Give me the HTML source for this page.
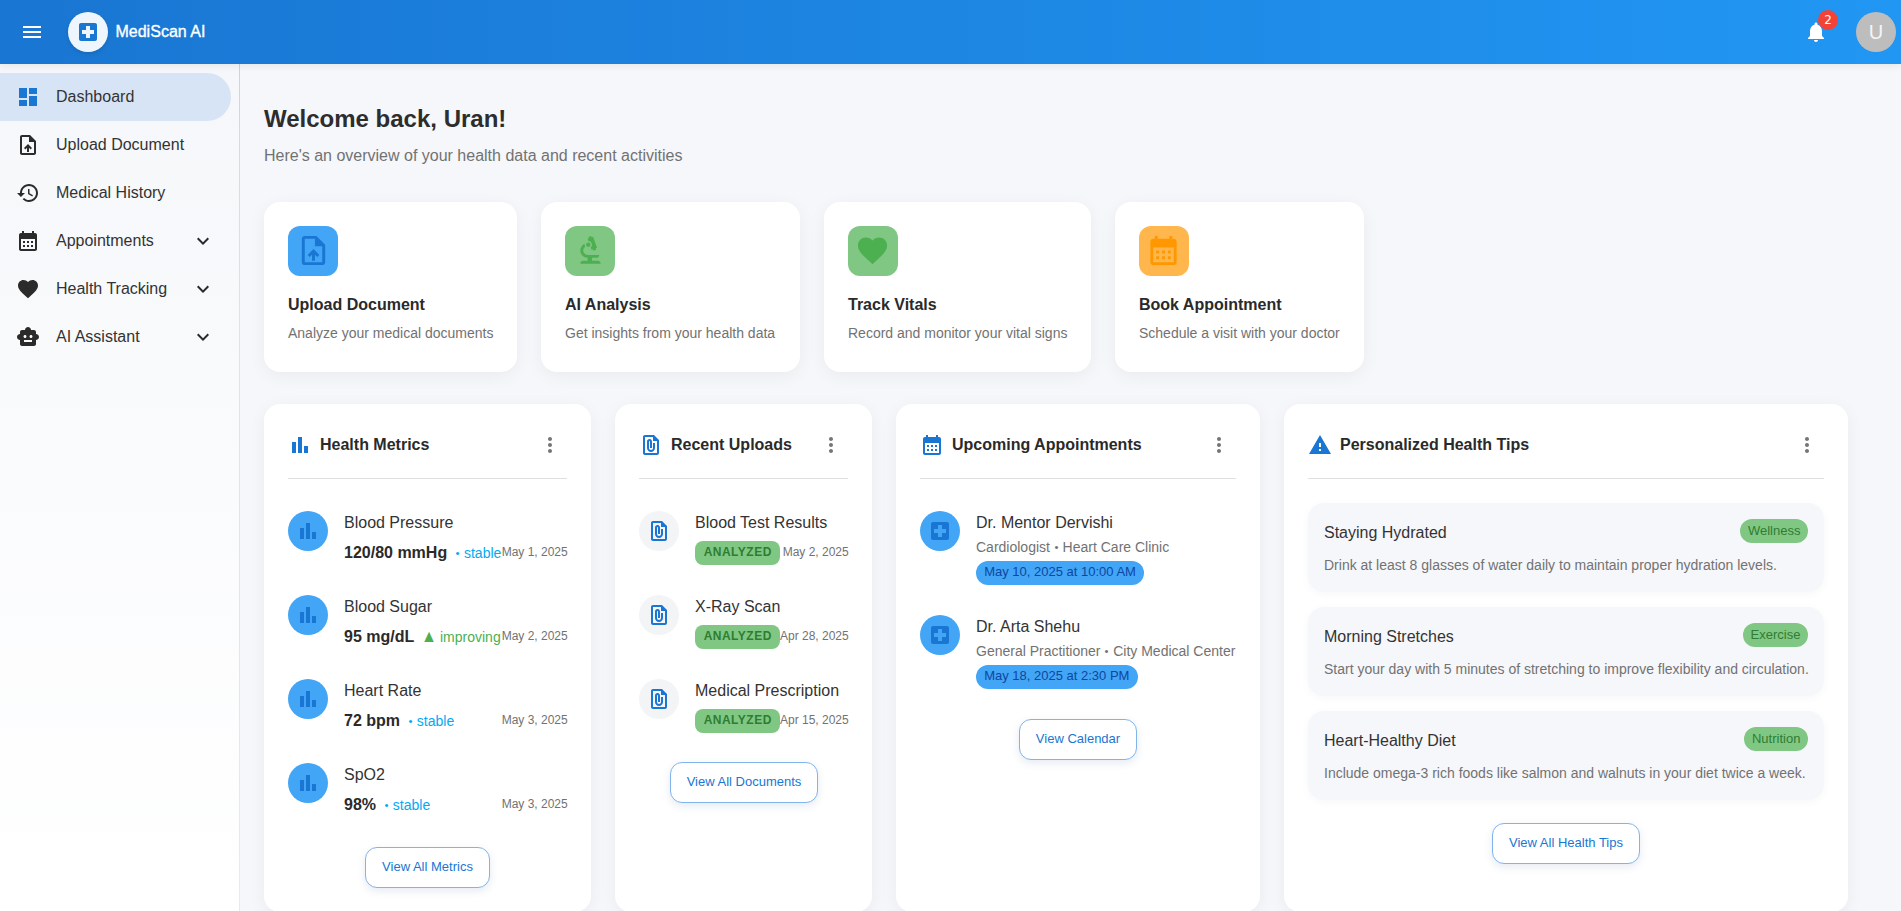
<!DOCTYPE html>
<html lang="en">
<head>
<meta charset="utf-8">
<title>MediScan AI</title>
<style>
*{box-sizing:border-box;margin:0;padding:0}
html,body{width:1901px;height:911px;overflow:hidden}
body{font-family:"Liberation Sans",Arial,sans-serif;background:#f5f7fb;color:#222;position:relative}
svg{display:block}
.abs{position:absolute}
/* header */
#hdr{position:absolute;left:0;top:0;width:1901px;height:64px;background:linear-gradient(90deg,#1976d2 0%,#2196f3 100%);box-shadow:0 2px 8px rgba(0,0,0,.07);z-index:5}
#logo{position:absolute;left:68px;top:12px;width:40px;height:40px;border-radius:50%;background:rgba(255,255,255,.93);box-shadow:0 2px 4px rgba(0,0,0,.12)}
#brand{position:absolute;left:115.4px;top:22px;font-size:16px;line-height:20px;color:#fff;letter-spacing:.03px;-webkit-text-stroke:.35px #fff;white-space:nowrap}
#badge{position:absolute;left:1818px;top:10px;width:20px;height:20px;border-radius:10px;background:#f44336;color:#fff;font-family:"DejaVu Sans","Liberation Sans",sans-serif;font-size:12px;line-height:20px;text-align:center;font-weight:500}
#avatar{position:absolute;left:1856px;top:12px;width:40px;height:40px;border-radius:50%;background:#bdbdbd;color:#f5f5f5;font-size:20px;line-height:40px;text-align:center}
/* sidebar */
#side{position:absolute;left:0;top:64px;width:240px;height:847px;background:linear-gradient(180deg,#f5f7fa 0%,#fff 100%)}
#side:after{content:'';position:absolute;right:0;top:0;width:1px;height:100%;background:linear-gradient(180deg,#d2d2d3 0,#dadadb 10%,#e2e2e4 32%,#e8e9ec 100%)}
.nav{position:absolute;left:0;width:231px;height:48px;border-radius:0 24px 24px 0;font-size:16px;line-height:48px;color:#333;padding-left:56px;white-space:nowrap}
.nav.sel{background:#d7e4f6}
.nav svg.i{position:absolute;left:16px;top:12px;width:24px;height:24px;fill:#2b2b2b}
.nav.sel svg.i{fill:#1976d2}
.nav svg.c{position:absolute;left:191px;top:12px;width:24px;height:24px;fill:#2b2b2b}
/* main */
h1{position:absolute;left:264px;top:103px;font-size:24px;line-height:32px;font-weight:700;color:#2d2d2d;white-space:nowrap}
#sub{position:absolute;left:264px;top:144px;font-size:16px;line-height:24px;color:#727272;white-space:nowrap}
.card{position:absolute;background:#fff;border-radius:16px;box-shadow:0 4px 18px rgba(0,0,0,.05)}
.q .ib{position:absolute;left:24px;top:24px;width:50px;height:50px;border-radius:12px}
.q .ib svg{position:absolute;left:7.5px;top:7px;width:35px;height:35px}
.q .t{position:absolute;left:24px;top:91px;font-size:16px;line-height:24px;font-weight:700;color:#2a2a2a;white-space:nowrap}
.q .d{position:absolute;left:24px;top:121px;font-size:14px;line-height:20px;color:#727272;white-space:nowrap}
.b .hi{position:absolute;left:24px;top:29px;width:24px;height:24px;fill:#1976d2}
.b .ht{position:absolute;left:56px;top:29px;font-size:16px;line-height:24px;font-weight:700;color:#2a2a2a;white-space:nowrap}
.b .mv{position:absolute;top:29px;width:24px;height:24px;fill:#757575}
.b .hr{position:absolute;left:24px;right:24px;top:74px;height:1px;background:#e0e0e0}
.av{position:absolute;left:24px;width:40px;height:40px;border-radius:50%}
.av svg{position:absolute;left:8px;top:8px;width:24px;height:24px}
.it{position:absolute;left:80px;font-size:16px;line-height:24px;color:#333;white-space:nowrap}
.val{position:absolute;left:80px;font-size:16px;line-height:24px;font-weight:700;color:#2a2a2a;white-space:nowrap}
.tr{position:absolute;font-size:14px;line-height:20px;white-space:nowrap}
.dt{position:absolute;right:23.3px;font-size:12px;line-height:20px;color:#727272;white-space:nowrap}
.btn{position:absolute;height:40.8px;border:1px solid #80b4ea;border-radius:12px;background:#fff;color:#1976d2;font-size:13px;line-height:38px;text-align:center;box-shadow:0 3px 8px rgba(20,60,140,.11);white-space:nowrap}
.chip{position:absolute;border-radius:12px;white-space:nowrap;text-align:center}
.sm{position:absolute;left:80px;font-size:14px;line-height:20px;color:#727272;white-space:nowrap}
.tip{position:absolute;left:24px;width:516px;height:89px;border-radius:16px;background:#f6f7fb;box-shadow:0 2px 10px rgba(0,0,0,.035)}
.tip .tt{position:absolute;left:16px;top:18px;font-size:16px;line-height:24px;color:#333;white-space:nowrap}
.tip .td{position:absolute;left:16px;top:52px;font-size:14px;line-height:20px;color:#727272;white-space:nowrap}
.tip .tc{position:absolute;right:16px;top:16px;height:24px;border-radius:12px;background:#81c784;color:#2e7d32;font-size:13px;line-height:23px;padding:0 7.6px;white-space:nowrap}
.trs{font-size:14px;font-weight:400;margin-left:8px}
.chip.an{height:23.5px;width:85px;border-radius:8px;background:#81c784;color:#2e7d32;font-size:12px;line-height:23px;font-weight:700;letter-spacing:.5px;padding-left:.5px}
.chip.ap{height:24px;border-radius:12px;background:#42a5f5;color:#0d47a1;font-size:13px;line-height:21px;padding:0 8.2px}
.tri{display:inline-block;transform:translateY(.9px) scale(1.15,1.25);transform-origin:50% 82%}
.bl{display:inline-block;transform:scale(.82);transform-origin:50% 58%}
</style>
</head>
<body>
<div id="hdr">
  <svg class="abs" style="left:20px;top:20px;width:24px;height:24px;fill:#fff" viewBox="0 0 24 24"><path d="M3 18h18v-2H3v2zm0-5h18v-2H3v2zm0-7v2h18V6H3z"/></svg>
  <div id="logo"><svg class="abs" style="left:8px;top:8px;width:24px;height:24px;fill:#1976d2" viewBox="0 0 24 24"><path d="M19 3H5c-1.100 0-1.990.9-1.990 2L3 19c0 1.100.9 2 2 2h14c1.100 0 2-.9 2-2V5c0-1.100-.9-2-2-2zm-1 11h-4v4h-4v-4H6v-4h4V6h4v4h4v4z"/></svg></div>
  <div id="brand">MediScan AI</div>
  <svg class="abs" style="left:1804px;top:20px;width:24px;height:24px;fill:#fff" viewBox="0 0 24 24"><path d="M12 22c1.100 0 2-.9 2-2h-4c0 1.100.89 2 2 2zm6-6v-5c0-3.070-1.640-5.640-4.500-6.320V4c0-.83-.67-1.500-1.500-1.500s-1.500.67-1.500 1.500v.68C7.630 5.360 6 7.920 6 11v5l-2 2v1h16v-1l-2-2z"/></svg>
  <div id="badge">2</div>
  <div id="avatar">U</div>
</div>
<div id="side">
  <div class="nav sel" style="top:9px"><svg class="i" viewBox="0 0 24 24"><path d="M3 13h8V3H3v10zm0 8h8v-6H3v6zm10 0h8V11h-8v10zm0-18v6h8V3h-8z"/></svg>Dashboard</div>
  <div class="nav" style="top:57px"><svg class="i" viewBox="0 0 24 24"><path d="M14 2H6c-1.100 0-1.990.9-1.990 2L4 20c0 1.100.89 2 1.990 2H18c1.100 0 2-.9 2-2V8l-6-6zm4 18H6V4h7v5h5v11zM8 15.010l1.410 1.410L11 14.840V19h2v-4.160l1.590 1.590L16 15.010 12.010 11 8 15.010z"/></svg>Upload Document</div>
  <div class="nav" style="top:105px"><svg class="i" viewBox="0 0 24 24"><path d="M13 3c-4.970 0-9 4.030-9 9H1l3.890 3.890.07.140L9 12H6c0-3.870 3.130-7 7-7s7 3.130 7 7-3.130 7-7 7c-1.930 0-3.680-.79-4.940-2.060l-1.420 1.420C8.270 19.990 10.510 21 13 21c4.970 0 9-4.030 9-9s-4.030-9-9-9zm-1 5v5l4.280 2.540.72-1.210-3.500-2.080V8H12z"/></svg>Medical History</div>
  <div class="nav" style="top:153px"><svg class="i" viewBox="0 0 24 24"><path d="M19 4h-1V2h-2v2H8V2H6v2H5c-1.110 0-1.990.9-1.990 2L3 20c0 1.100.89 2 2 2h14c1.100 0 2-.9 2-2V6c0-1.100-.9-2-2-2zm0 16H5V10h14v10zM9 14H7v-2h2v2zm4 0h-2v-2h2v2zm4 0h-2v-2h2v2zm-8 4H7v-2h2v2zm4 0h-2v-2h2v2zm4 0h-2v-2h2v2z"/></svg>Appointments<svg class="c" viewBox="0 0 24 24"><path d="M16.590 8.590 12 13.170 7.410 8.590 6 10l6 6 6-6z"/></svg></div>
  <div class="nav" style="top:201px"><svg class="i" viewBox="0 0 24 24"><path d="m12 21.350-1.450-1.320C5.400 15.360 2 12.280 2 8.500 2 5.420 4.420 3 7.500 3c1.740 0 3.410.81 4.500 2.090C13.090 3.810 14.760 3 16.500 3 19.580 3 22 5.420 22 8.500c0 3.780-3.400 6.860-8.550 11.540L12 21.350z"/></svg>Health Tracking<svg class="c" viewBox="0 0 24 24"><path d="M16.590 8.590 12 13.170 7.410 8.590 6 10l6 6 6-6z"/></svg></div>
  <div class="nav" style="top:249px"><svg class="i" viewBox="0 0 24 24"><path d="M20 9V7c0-1.100-.9-2-2-2h-3c0-1.660-1.340-3-3-3S9 3.340 9 5H6c-1.100 0-2 .9-2 2v2c-1.660 0-3 1.340-3 3s1.340 3 3 3v4c0 1.100.9 2 2 2h12c1.100 0 2-.9 2-2v-4c1.660 0 3-1.340 3-3s-1.340-3-3-3zM7.500 11.500c0-.83.67-1.500 1.500-1.500s1.500.67 1.500 1.500S9.830 13 9 13s-1.500-.67-1.500-1.500zM16 17H8v-2h8v2zm-1-4c-.83 0-1.500-.67-1.500-1.500S14.170 10 15 10s1.500.67 1.500 1.500S15.830 13 15 13z"/></svg>AI Assistant<svg class="c" viewBox="0 0 24 24"><path d="M16.590 8.590 12 13.170 7.410 8.590 6 10l6 6 6-6z"/></svg></div>
</div>
<h1>Welcome back, Uran!</h1>
<div id="sub">Here's an overview of your health data and recent activities</div>
<div class="card q" style="left:264px;top:202px;width:253px;height:170px">
  <div class="ib" style="background:#42a5f5"><svg viewBox="0 0 24 24" fill="#1976d2"><path d="M14 2H6c-1.100 0-1.990.9-1.990 2L4 20c0 1.100.89 2 1.990 2H18c1.100 0 2-.9 2-2V8l-6-6zm4 18H6V4h7v5h5v11zM8 15.010l1.410 1.410L11 14.840V19h2v-4.160l1.590 1.590L16 15.010 12.010 11 8 15.010z"/></svg></div>
  <div class="t">Upload Document</div><div class="d">Analyze your medical documents</div>
</div>
<div class="card q" style="left:541px;top:202px;width:259px;height:170px">
  <div class="ib" style="background:#81c784"><svg viewBox="0 0 24 24" fill="#4caf50"><path d="M7 19c-1.100 0-2 .9-2 2h14c0-1.100-.9-2-2-2h-4v-2h3c1.100 0 2-.9 2-2h-8c-1.660 0-3-1.340-3-3 0-1.090.59-2.040 1.460-2.560C8.170 9.030 8 8.540 8 8c0-.21.040-.42.090-.62C6.280 8.130 5 9.920 5 12c0 2.760 2.240 5 5 5v2H7z"/><path d="M10.560 5.510C11.910 5.540 13 6.640 13 8c0 .75-.33 1.410-.85 1.870l.59 1.620.94-.34.34.94 1.880-.68-.34-.94.94-.34-2.740-7.520-.94.34-.34-.94-1.880.68.34.94-.94.35.56 1.530z"/><circle cx="10.500" cy="8" r="1.500"/></svg></div>
  <div class="t">AI Analysis</div><div class="d">Get insights from your health data</div>
</div>
<div class="card q" style="left:824px;top:202px;width:267px;height:170px">
  <div class="ib" style="background:#81c784"><svg style="left:6.5px;top:6.5px" viewBox="0 0 24 24" fill="#4caf50"><path d="m12 21.350-1.450-1.320C5.400 15.360 2 12.280 2 8.500 2 5.420 4.420 3 7.500 3c1.740 0 3.410.81 4.500 2.090C13.090 3.810 14.760 3 16.500 3 19.580 3 22 5.420 22 8.500c0 3.780-3.400 6.860-8.550 11.540L12 21.350z"/></svg></div>
  <div class="t">Track Vitals</div><div class="d">Record and monitor your vital signs</div>
</div>
<div class="card q" style="left:1115px;top:202px;width:249px;height:170px">
  <div class="ib" style="background:#ffb74d"><svg style="left:6.5px;top:7px" viewBox="0 0 24 24" fill="#ff9800"><path d="M19 4h-1V2h-2v2H8V2H6v2H5c-1.110 0-1.990.9-1.990 2L3 20c0 1.100.89 2 2 2h14c1.100 0 2-.9 2-2V6c0-1.100-.9-2-2-2zm0 16H5V10h14v10zM9 14H7v-2h2v2zm4 0h-2v-2h2v2zm4 0h-2v-2h2v2zm-8 4H7v-2h2v2zm4 0h-2v-2h2v2zm4 0h-2v-2h2v2z"/></svg></div>
  <div class="t">Book Appointment</div><div class="d">Schedule a visit with your doctor</div>
</div>

<div class="card b" style="left:264px;top:404px;width:327px;height:508px">
<svg class="hi" style="" viewBox="0 0 24 24"><path d="M4 9h4v11H4zm12 4h4v7h-4zm-6-9h4v16h-4z"/></svg><div class="ht">Health Metrics</div><svg class="mv" style="left:274px" viewBox="0 0 24 24"><path d="M12 8c1.100 0 2-.9 2-2s-.9-2-2-2-2 .9-2 2 .9 2 2 2zm0 2c-1.100 0-2 .9-2 2s.9 2 2 2 2-.9 2-2-.9-2-2-2zm0 6c-1.100 0-2 .9-2 2s.9 2 2 2 2-.9 2-2-.9-2-2-2z"/></svg><div class="hr"></div>
<div class="av" style="top:107px;background:#42a5f5"><svg class="" style="fill:#1976d2" viewBox="0 0 24 24"><path d="M4 9h4v11H4zm12 4h4v7h-4zm-6-9h4v16h-4z"/></svg></div>
<div class="it" style="top:107px">Blood Pressure</div>
<div class="val" style="top:137px">120/80 mmHg<span class="trs" style="color:#03a9f4"><span class="bl">•</span> stable</span></div>
<div class="dt" style="top:138px">May 1, 2025</div>
<div class="av" style="top:191px;background:#42a5f5"><svg class="" style="fill:#1976d2" viewBox="0 0 24 24"><path d="M4 9h4v11H4zm12 4h4v7h-4zm-6-9h4v16h-4z"/></svg></div>
<div class="it" style="top:191px">Blood Sugar</div>
<div class="val" style="top:221px">95 mg/dL<span class="trs" style="color:#4caf50"><span class="tri">▲</span> improving</span></div>
<div class="dt" style="top:222px">May 2, 2025</div>
<div class="av" style="top:275px;background:#42a5f5"><svg class="" style="fill:#1976d2" viewBox="0 0 24 24"><path d="M4 9h4v11H4zm12 4h4v7h-4zm-6-9h4v16h-4z"/></svg></div>
<div class="it" style="top:275px">Heart Rate</div>
<div class="val" style="top:305px">72 bpm<span class="trs" style="color:#03a9f4"><span class="bl">•</span> stable</span></div>
<div class="dt" style="top:306px">May 3, 2025</div>
<div class="av" style="top:359px;background:#42a5f5"><svg class="" style="fill:#1976d2" viewBox="0 0 24 24"><path d="M4 9h4v11H4zm12 4h4v7h-4zm-6-9h4v16h-4z"/></svg></div>
<div class="it" style="top:359px">SpO2</div>
<div class="val" style="top:389px">98%<span class="trs" style="color:#03a9f4"><span class="bl">•</span> stable</span></div>
<div class="dt" style="top:390px">May 3, 2025</div>
<div class="btn" style="left:101px;top:443px;width:125px">View All Metrics</div>
</div>
<div class="card b" style="left:615px;top:404px;width:257px;height:508px">
<svg class="hi" style="" viewBox="0 0 24 24"><path d="M15 2H6c-1.100 0-2 .9-2 2v16c0 1.100.9 2 2 2h12c1.100 0 2-.9 2-2V7l-5-5zM6 20V4h8v4h4v12H6zm10-10v5c0 2.210-1.790 4-4 4s-4-1.790-4-4V8.500c0-1.470 1.260-2.640 2.760-2.490 1.300.13 2.240 1.320 2.240 2.630V15h-2V8.500c0-.28-.22-.5-.5-.5s-.5.220-.5.500V15c0 1.100.9 2 2 2s2-.9 2-2v-5h2z"/></svg><div class="ht">Recent Uploads</div><svg class="mv" style="left:204px" viewBox="0 0 24 24"><path d="M12 8c1.100 0 2-.9 2-2s-.9-2-2-2-2 .9-2 2 .9 2 2 2zm0 2c-1.100 0-2 .9-2 2s.9 2 2 2 2-.9 2-2-.9-2-2-2zm0 6c-1.100 0-2 .9-2 2s.9 2 2 2 2-.9 2-2-.9-2-2-2z"/></svg><div class="hr"></div>
<div class="av" style="top:107px;background:#f3f4f6"><svg class="" style="fill:#1976d2" viewBox="0 0 24 24"><path d="M15 2H6c-1.100 0-2 .9-2 2v16c0 1.100.9 2 2 2h12c1.100 0 2-.9 2-2V7l-5-5zM6 20V4h8v4h4v12H6zm10-10v5c0 2.210-1.790 4-4 4s-4-1.790-4-4V8.500c0-1.470 1.260-2.640 2.760-2.490 1.300.13 2.240 1.320 2.240 2.630V15h-2V8.500c0-.28-.22-.5-.5-.5s-.5.220-.5.500V15c0 1.100.9 2 2 2s2-.9 2-2v-5h2z"/></svg></div>
<div class="it" style="top:107px">Blood Test Results</div>
<div class="chip an" style="left:80px;top:137px">ANALYZED</div>
<div class="dt" style="top:138px">May 2, 2025</div>
<div class="av" style="top:191px;background:#f3f4f6"><svg class="" style="fill:#1976d2" viewBox="0 0 24 24"><path d="M15 2H6c-1.100 0-2 .9-2 2v16c0 1.100.9 2 2 2h12c1.100 0 2-.9 2-2V7l-5-5zM6 20V4h8v4h4v12H6zm10-10v5c0 2.210-1.790 4-4 4s-4-1.790-4-4V8.500c0-1.470 1.260-2.640 2.760-2.490 1.300.13 2.240 1.320 2.240 2.630V15h-2V8.500c0-.28-.22-.5-.5-.5s-.5.220-.5.500V15c0 1.100.9 2 2 2s2-.9 2-2v-5h2z"/></svg></div>
<div class="it" style="top:191px">X-Ray Scan</div>
<div class="chip an" style="left:80px;top:221px">ANALYZED</div>
<div class="dt" style="top:222px">Apr 28, 2025</div>
<div class="av" style="top:275px;background:#f3f4f6"><svg class="" style="fill:#1976d2" viewBox="0 0 24 24"><path d="M15 2H6c-1.100 0-2 .9-2 2v16c0 1.100.9 2 2 2h12c1.100 0 2-.9 2-2V7l-5-5zM6 20V4h8v4h4v12H6zm10-10v5c0 2.210-1.790 4-4 4s-4-1.790-4-4V8.500c0-1.470 1.260-2.640 2.760-2.490 1.300.13 2.240 1.320 2.240 2.630V15h-2V8.500c0-.28-.22-.5-.5-.5s-.5.220-.5.500V15c0 1.100.9 2 2 2s2-.9 2-2v-5h2z"/></svg></div>
<div class="it" style="top:275px">Medical Prescription</div>
<div class="chip an" style="left:80px;top:305px">ANALYZED</div>
<div class="dt" style="top:306px">Apr 15, 2025</div>
<div class="btn" style="left:55px;top:358px;width:148px">View All Documents</div>
</div>
<div class="card b" style="left:896px;top:404px;width:364px;height:508px">
<svg class="hi" style="" viewBox="0 0 24 24"><path d="M19 4h-1V2h-2v2H8V2H6v2H5c-1.110 0-1.990.9-1.990 2L3 20c0 1.100.89 2 2 2h14c1.100 0 2-.9 2-2V6c0-1.100-.9-2-2-2zm0 16H5V10h14v10zM9 14H7v-2h2v2zm4 0h-2v-2h2v2zm4 0h-2v-2h2v2zm-8 4H7v-2h2v2zm4 0h-2v-2h2v2zm4 0h-2v-2h2v2z"/></svg><div class="ht">Upcoming Appointments</div><svg class="mv" style="left:311px" viewBox="0 0 24 24"><path d="M12 8c1.100 0 2-.9 2-2s-.9-2-2-2-2 .9-2 2 .9 2 2 2zm0 2c-1.100 0-2 .9-2 2s.9 2 2 2 2-.9 2-2-.9-2-2-2zm0 6c-1.100 0-2 .9-2 2s.9 2 2 2 2-.9 2-2-.9-2-2-2z"/></svg><div class="hr"></div>
<div class="av" style="top:107px;background:#42a5f5"><svg class="" style="fill:#1976d2" viewBox="0 0 24 24"><path d="M19 3H5c-1.100 0-1.990.9-1.990 2L3 19c0 1.100.9 2 2 2h14c1.100 0 2-.9 2-2V5c0-1.100-.9-2-2-2zm-1 11h-4v4h-4v-4H6v-4h4V6h4v4h4v4z"/></svg></div>
<div class="it" style="top:107px">Dr. Mentor Dervishi</div>
<div class="sm" style="top:133px">Cardiologist <span class="bl">•</span> Heart Care Clinic</div>
<div class="chip ap" style="left:80px;top:157px">May 10, 2025 at 10:00 AM</div>
<div class="av" style="top:211px;background:#42a5f5"><svg class="" style="fill:#1976d2" viewBox="0 0 24 24"><path d="M19 3H5c-1.100 0-1.990.9-1.990 2L3 19c0 1.100.9 2 2 2h14c1.100 0 2-.9 2-2V5c0-1.100-.9-2-2-2zm-1 11h-4v4h-4v-4H6v-4h4V6h4v4h4v4z"/></svg></div>
<div class="it" style="top:211px">Dr. Arta Shehu</div>
<div class="sm" style="top:237px">General Practitioner <span class="bl">•</span> City Medical Center</div>
<div class="chip ap" style="left:80px;top:261px">May 18, 2025 at 2:30 PM</div>
<div class="btn" style="left:123px;top:315px;width:118px">View Calendar</div>
</div>
<div class="card b" style="left:1284px;top:404px;width:564px;height:508px">
<svg class="hi" style="" viewBox="0 0 24 24"><path d="M1 21h22L12 2 1 21zm12-3h-2v-2h2v2zm0-4h-2v-4h2v4z"/></svg><div class="ht">Personalized Health Tips</div><svg class="mv" style="left:511px" viewBox="0 0 24 24"><path d="M12 8c1.100 0 2-.9 2-2s-.9-2-2-2-2 .9-2 2 .9 2 2 2zm0 2c-1.100 0-2 .9-2 2s.9 2 2 2 2-.9 2-2-.9-2-2-2zm0 6c-1.100 0-2 .9-2 2s.9 2 2 2 2-.9 2-2-.9-2-2-2z"/></svg><div class="hr"></div>
<div class="tip" style="top:99px"><div class="tt">Staying Hydrated</div><div class="tc">Wellness</div><div class="td">Drink at least 8 glasses of water daily to maintain proper hydration levels.</div></div>
<div class="tip" style="top:203px"><div class="tt">Morning Stretches</div><div class="tc">Exercise</div><div class="td">Start your day with 5 minutes of stretching to improve flexibility and circulation.</div></div>
<div class="tip" style="top:307px"><div class="tt">Heart-Healthy Diet</div><div class="tc">Nutrition</div><div class="td">Include omega-3 rich foods like salmon and walnuts in your diet twice a week.</div></div>
<div class="btn" style="left:208px;top:419px;width:148px">View All Health Tips</div>
</div>
</body>
</html>
